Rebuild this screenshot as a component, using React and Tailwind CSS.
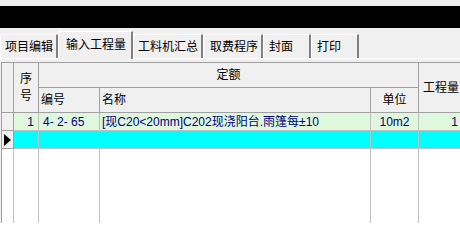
import React from 'react';

const tabs = [
  { label: '项目编辑', width: 'w-[58px]', pad: 'pl-[4px]' },
  { label: '输入工程量', width: 'w-[75px]', pad: 'pl-[7px]', active: true },
  { label: '工料机汇总', width: 'w-[70px]', pad: 'pl-[4px]' },
  { label: '取费程序', width: 'w-[60px]', pad: 'pl-[6px]' },
  { label: '封面', width: 'w-[48px]', pad: 'pl-[5px]' },
  { label: '打印', width: 'w-[48px]', pad: 'pl-[5px]' },
];

const App = () => {
  return (
    <div
      className="w-[460px] h-[223px] overflow-hidden bg-[#f0f0f0] text-[12px] text-black"
      style={{ fontFamily: '"Liberation Sans", "Noto Sans CJK SC", sans-serif' }}
    >
      {/* title strip */}
      <div className="h-[6px]" />
      <div className="h-[22px] bg-black" />

      {/* Tabs */}
      <div className="flex items-end h-[31px] border-b border-white">
        {tabs.map((tab) =>
          tab.active ? (
            <div
              key={tab.label}
              className={`${tab.width} ${tab.pad} relative z-10 -mb-px h-[28px] pt-[5px] bg-[#f0f0f0] border-t border-l border-white border-r-2 border-r-[#808080] leading-[16px]`}
            >
              {tab.label}
            </div>
          ) : (
            <div
              key={tab.label}
              className={`${tab.width} ${tab.pad} h-[24px] pt-[4px] border-t border-l border-white border-r-2 border-r-[#808080] leading-[16px]`}
            >
              {tab.label}
            </div>
          )
        )}
      </div>
      <div className="h-[3px]" />

      {/* Grid */}
      <div className="ml-[1px] h-[161px] border-t border-l border-[#a0a0a0]">
        <div className="grid h-full grid-cols-[12px_25px_61px_271px_48px_1fr] grid-rows-[25px_25px_18px_18px_1fr]">
          {/* header */}
          <div className="row-span-2 border-r border-b border-[#a0a0a0]" />
          <div className="row-span-2 flex flex-col items-center justify-center border-r border-b border-[#a0a0a0] leading-[17px]">
            <span>序</span>
            <span>号</span>
          </div>
          <div className="col-span-3 flex items-center justify-center border-r border-b border-[#a0a0a0]">定额</div>
          <div className="row-span-2 flex items-center pl-[4px] border-b border-[#a0a0a0] whitespace-nowrap">工程量</div>
          <div className="flex items-center pl-[2px] border-r border-b border-[#a0a0a0]">编号</div>
          <div className="flex items-center pl-[2px] border-r border-b border-[#a0a0a0]">名称</div>
          <div className="flex items-center justify-center border-r border-b border-[#a0a0a0]">单位</div>

          {/* row 1 */}
          <div className="bg-[#f0f0f0] border-r border-b border-[#a0a0a0]" />
          <div className="flex items-center justify-end pr-[4px] bg-[#dff7dc] text-[#000080] border-r border-b border-[#c0c0c0]">1</div>
          <div className="flex items-center pl-[4px] bg-[#dff7dc] text-[#000080] border-r border-b border-[#c0c0c0] whitespace-pre">4- 2- 65</div>
          <div className="flex items-center pl-[2px] bg-[#dff7dc] text-[#000080] border-r border-b border-[#c0c0c0] whitespace-nowrap overflow-hidden">
            [现C20&lt;20mm]C202现浇阳台.雨篷每±10
          </div>
          <div className="flex items-center justify-center bg-[#dff7dc] text-[#000080] border-r border-b border-[#c0c0c0]">10m2</div>
          <div className="flex items-center justify-end pr-[2px] bg-[#dff7dc] text-[#000080] border-b border-[#c0c0c0]">1</div>

          {/* row 2 (current) */}
          <div className="flex items-center justify-start pl-[2px] bg-[#f0f0f0] border-r border-b border-[#a0a0a0]">
            <span className="w-0 h-0 border-y-[6px] border-y-transparent border-l-[7px] border-l-black" />
          </div>
          <div className="bg-[#00ffff] border-r border-b border-[#c0c0c0]" />
          <div className="bg-[#00ffff] border-r border-b border-[#c0c0c0]" />
          <div className="bg-[#00ffff] border-r border-b border-[#c0c0c0]" />
          <div className="bg-[#00ffff] border-r border-b border-[#c0c0c0]" />
          <div className="bg-[#00ffff] border-b border-[#c0c0c0]" />

          {/* empty area */}
          <div className="bg-white border-r border-[#c0c0c0]" />
          <div className="bg-white border-r border-[#c0c0c0]" />
          <div className="bg-white border-r border-[#c0c0c0]" />
          <div className="bg-white border-r border-[#c0c0c0]" />
          <div className="bg-white border-r border-[#c0c0c0]" />
          <div className="bg-white" />
        </div>
      </div>
    </div>
  );
};

export default App;
